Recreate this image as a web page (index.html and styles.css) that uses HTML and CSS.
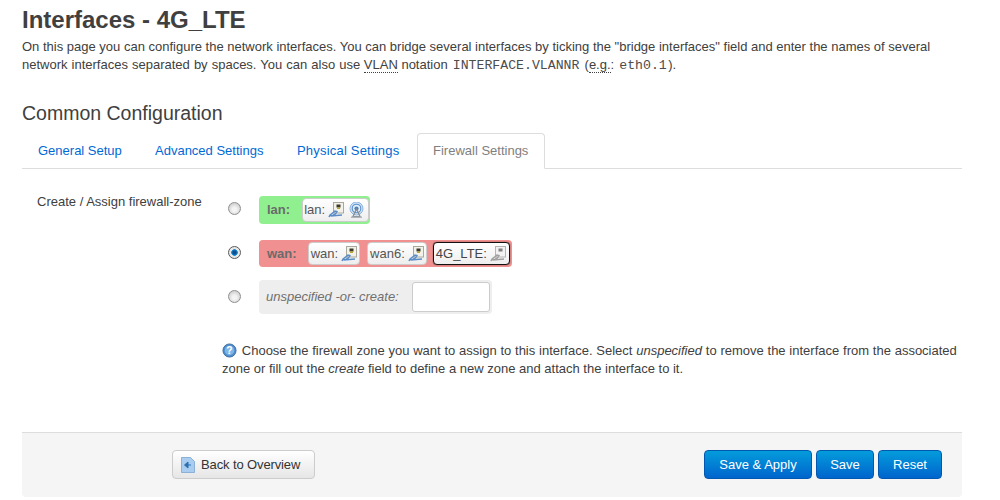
FILE: index.html
```html
<!DOCTYPE html>
<html lang="en">
<head>
<meta charset="utf-8">
<title>Interfaces - 4G_LTE</title>
<link rel="stylesheet" href="styles.css">
</head>
<body>
<svg class="defs" width="0" height="0" aria-hidden="true">
  <defs>
    <symbol id="eth" viewBox="0 0 16 16">
      <rect x="5.5" y="0.5" width="10" height="10.5" fill="#f2f2ea" stroke="#a8a89c"/>
      <rect x="8.5" y="2.5" width="4" height="3" fill="#3a3a2a"/>
      <rect x="9" y="5.5" width="3" height="1.5" fill="#b9a62a"/>
      <path d="M1 15 C2 11 5 12 7 9 L9 9.5 C8 12 5 13.5 2.5 14 L14 13" fill="none" stroke="#5a8cc8" stroke-width="1.4"/>
    </symbol>
    <symbol id="eth-off" viewBox="0 0 16 16">
      <rect x="5.5" y="0.5" width="10" height="10.5" fill="#f2f2f2" stroke="#b4b4b4"/>
      <rect x="8.5" y="2.5" width="4" height="3" fill="#808080"/>
      <path d="M1 15 C2 11 5 12 7 9 L9 9.5 C8 12 5 13.5 2.5 14 L14 13" fill="none" stroke="#a0a0a0" stroke-width="1.4"/>
    </symbol>
    <symbol id="wifi" viewBox="0 0 17 16">
      <circle cx="8.5" cy="6.5" r="6.5" fill="#cfe2f5" stroke="#8db4de"/>
      <circle cx="8.5" cy="6.5" r="4.3" fill="#e4eff9" stroke="#5a90cc" stroke-width="1.1"/>
      <circle cx="8.5" cy="6.5" r="2.1" fill="#4a80bc"/>
      <path d="M8.5 7 L5 14.5 H12 Z" fill="none" stroke="#858d96" stroke-width="1.2"/>
      <path d="M3 15.2 H14" stroke="#a2a8ae" stroke-width="1.2"/>
    </symbol>
  </defs>
</svg>
<main class="page">
  <h2 class="title">Interfaces - 4G_LTE</h2>
  <p class="intro">On this page you can configure the network interfaces. You can bridge several interfaces by ticking the "bridge interfaces" field and enter the names of several <span class="intro-second">network interfaces separated by spaces. You can also use</span> <abbr>VLAN</abbr> notation <code>INTERFACE.VLANNR</code> (<abbr>e.g.</abbr>: <code>eth0.1</code>).</p>
  <h3 class="section">Common Configuration</h3>
  <ul class="tabs">
    <li class="tab tab-general"><a href="#">General Setup</a></li>
    <li class="tab tab-advanced"><a href="#">Advanced Settings</a></li>
    <li class="tab tab-physical"><a href="#">Physical Settings</a></li>
    <li class="tab tab-active"><a href="#">Firewall Settings</a></li>
  </ul>
  <div class="row">
    <div class="row-label">Create / Assign firewall-zone</div>
    <div class="row-field">
      <div class="zone-line">
        <span class="radio"></span>
        <div class="zone zone-lan">
          <strong class="zone-name">lan:</strong>
          <span class="iface">lan: <svg class="ico"><use href="#eth"/></svg> <svg class="ico ico-wifi"><use href="#wifi"/></svg></span>
        </div>
      </div>
      <div class="zone-line line-wan">
        <span class="radio radio-on"></span>
        <div class="zone zone-wan">
          <strong class="zone-name">wan:</strong>
          <span class="iface iface-first">wan: <svg class="ico"><use href="#eth"/></svg></span>
          <span class="iface">wan6: <svg class="ico"><use href="#eth"/></svg></span>
          <span class="iface iface-current">4G_LTE: <svg class="ico"><use href="#eth-off"/></svg></span>
        </div>
      </div>
      <div class="zone-line line-new">
        <span class="radio radio-new"></span>
        <div class="zone zone-new">
          <em>unspecified -or- create:</em>
          <input class="zone-input" type="text" aria-label="create">
        </div>
      </div>
      <p class="help"><span class="help-first"><svg class="help-ico" viewBox="0 0 16 16"><circle cx="8" cy="8" r="7" fill="#4f8fd0" stroke="#3f6f9f"/><circle cx="8" cy="8" r="5" fill="#7fb6e8"/><text x="8" y="11.5" class="help-q">?</text></svg> Choose the firewall zone you want to assign to this interface. Select <em>unspecified</em> to remove the interface from the associated</span> zone or fill out the <em>create</em> field to define a new zone and attach the interface to it.</p>
    </div>
  </div>
  <div class="actions">
    <button class="btn btn-back" type="button"><svg class="back-ico" viewBox="0 0 16 16"><path d="M1.5 .5 H10.5 L14.5 4.5 V15.5 H1.5 Z" fill="#a8cdf0" stroke="#fff"/><path d="M1.5 .5 H10.5 L14.5 4.5 V15.5 H1.5 Z" fill="none" stroke="#5b8fc4" stroke-opacity=".7"/><path d="M11 8 H7 M8 5 L4.5 8 L8 11 Z" stroke="#2c6fb0" fill="#2c6fb0"/></svg>Back to Overview</button>
    <div class="actions-right">
      <button class="btn btn-blue btn-apply" type="button">Save &amp; Apply</button>
      <button class="btn btn-blue btn-save" type="button">Save</button>
      <button class="btn btn-blue btn-reset" type="button">Reset</button>
    </div>
  </div>
</main>
</body>
</html>
```
FILE: styles.css
```css
* { box-sizing: border-box; }
html, body { margin: 0; padding: 0; background: #fff; }
body {
  font-family: "Liberation Sans", Arial, sans-serif;
  font-size: 13px;
  line-height: 18px;
  color: #404040;
  height: 500px;
  overflow: hidden;
}
.defs { position: absolute; }
.page { width: 940px; margin-left: 22px; padding-top: 6px; }
.title { margin: 0; font-size: 24px; line-height: 28px; font-weight: bold; }
.intro { margin: 4px 0 0; }
.intro-second { word-spacing: .45px; }
abbr { border-bottom: 1px dotted #404040; }
code { font-family: "Liberation Mono", monospace; font-size: 13.2px; line-height: 1; margin: 0 1.5px; color: #4c4c4c; }
.section { margin: 26px 0 0; font-size: 19.5px; line-height: 26px; font-weight: normal; }
.tabs {
  list-style: none; margin: 7px 0 0; padding: 0;
  display: flex; height: 36px;
  border-bottom: 1px solid #ddd;
}
.tab { height: 36px; }
.tab a {
  display: block; height: 35px; padding: 9px 0 0 16px;
  color: #0069d6; text-decoration: none;
}
.tab-general { width: 117px; }
.tab-advanced { width: 142px; }
.tab-physical { width: 136px; letter-spacing: .2px; }
.tab-active { width: 128px; }
.tab-active a {
  padding: 8px 0 0 15px;
  background: #fff; color: #808080;
  height: 36px;
  border: 1px solid #ddd; border-bottom-color: #fff;
  border-radius: 4px 4px 0 0;
}
.row { display: flex; margin-top: 24px; padding-left: 15px; }
.row-label { width: 183px; }
.row-field { width: 742px; margin-top: 3px; }
.zone-line { display: flex; height: 28px; padding-left: 8px; }
.line-wan { margin-top: 16px; height: 27px; }
.line-new { margin-top: 13px; height: 34px; }
.radio {
  width: 13px; height: 13px; border-radius: 50%; margin: 6px 18px 0 0; flex: none;
  border: 1px solid #8f8f8f;
  background: radial-gradient(circle at 50% 60%, #f4f4f4 0 2px, #d4d4d4 6px);
}
.radio-on {
  border-color: #5a5a5a;
  background: radial-gradient(circle, #0f4f8f 0 1.5px, #1c8fd8 3px, #e8e8e8 3.6px);
}
.radio-new { margin-top: 10px; }
.zone { display: flex; align-items: center; border-radius: 4px; height: 100%; padding: 0 3px 0 8px; color: #666; }
.zone-lan { background: #90f090; width: 111px; }
.zone-wan { background: #f09090; width: 253px; }
.zone-new { background: #eee; width: 233px; padding: 0 0 0 7px; }
.zone-name { margin-right: 12px; color: #6b6b6b; }
.zone-wan .zone-name { margin-right: 11px; }
.iface {
  display: inline-flex; align-items: center; gap: 3px; height: 23px; padding: 0 2px 0 2px;
  margin-right: 6px; white-space: nowrap; color: #555;
  background: linear-gradient(#fff, #eee);
  border: 1px solid #ccc; border-radius: 4px;
}
.zone-lan .iface { height: 24px; margin-right: 0; padding: 0 3px 0 1px; }
.iface-first { margin-right: 7px; }
.iface-current { border-color: #111; box-shadow: 0 0 1px #000; margin-right: 0; padding-right: 3px; color: #444; }
.ico { width: 16px; height: 16px; display: block; }
.ico-wifi { width: 17px; margin-left: 1px; }
.zone-new em { margin-right: 13px; color: #707070; }
.zone-input {
  width: 78px; height: 30px; padding: 0; background: #fff;
  border: 1px solid #ccc; border-radius: 3px; outline: 0;
}
.help { margin: 28px 0 0 2px; }
.help-first { word-spacing: .17px; }
.help-ico { width: 15px; height: 15px; vertical-align: -3px; margin-right: 1px; }
.help-q { font: bold 11px "Liberation Sans", sans-serif; fill: #fff; text-anchor: middle; }
.actions {
  display: flex; justify-content: space-between; align-items: flex-start;
  margin-top: 54px; height: 65px; padding: 17px 20px 0 150px;
  background: #f5f5f5; border-top: 1px solid #ddd; border-radius: 0 0 4px 4px;
}
.actions-right { display: flex; gap: 4px; }
.btn {
  height: 29px; padding: 0; font: 13px/18px "Liberation Sans", Arial, sans-serif;
  border-radius: 4px; cursor: pointer;
}
.btn-back {
  display: flex; align-items: center; width: 143px; padding-left: 7px; gap: 5px; color: #333;
  letter-spacing: -.12px;
  background: linear-gradient(#fff, #e6e6e6); border: 1px solid #ccc;
}
.back-ico { width: 16px; height: 16px; flex: none; }
.btn-blue {
  color: #fff; background: linear-gradient(#049cdb, #0064cd);
  border: 1px solid #0058b0;
}
.btn-apply { width: 108px; }
.btn-save { width: 58px; }
.btn-reset { width: 64px; }
```
